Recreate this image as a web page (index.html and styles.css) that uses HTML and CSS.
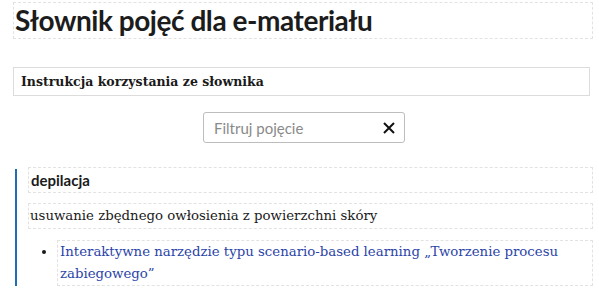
FILE: index.html
```html
<!DOCTYPE html>
<html lang="pl">
<head>
<meta charset="utf-8">
<title>Słownik pojęć dla e-materiału</title>
<link rel="stylesheet" href="styles.css">
</head>
<body>
<main class="page">
  <h1 class="title">Słownik pojęć dla e-materiału</h1>
  <div class="instructions">Instrukcja korzystania ze słownika</div>
  <div class="filter-row">
    <label class="filter">
      <input class="filter-input" type="text" placeholder="Filtruj pojęcie">
      <span class="filter-clear" aria-label="Wyczyść">
        <svg width="14" height="14" viewBox="0 0 14 14"><path d="M2 2 L12 12 M12 2 L2 12" stroke="#111" stroke-width="2" stroke-linecap="butt"/></svg>
      </span>
    </label>
  </div>
  <section class="entry">
    <div class="term">depilacja</div>
    <div class="definition">usuwanie zbędnego owłosienia z powierzchni skóry</div>
    <ul class="links">
      <li class="link-item"><a class="link" href="#">Interaktywne narzędzie typu scenario-based learning „Tworzenie procesu zabiegowego”</a></li>
    </ul>
  </section>
</main>
</body>
</html>
```

FILE: styles.css
```css
html, body {
  margin: 0;
  padding: 0;
  background: #fff;
}
body {
  color: #1a1a1a;
  font-family: "Liberation Serif", serif;
}
.page {
  width: 580px;
  margin-left: 13px;
  padding-top: 2px;
}
.title {
  margin: 0;
  border: 1px dashed #e2e2e2;
  height: 35px;
  font-family: Lato, sans-serif;
  font-weight: 700;
  font-size: 28px;
  line-height: 35px;
  padding-left: 1px;
  color: #1c1c1c;
  letter-spacing: -0.45px;
}
.instructions {
  margin-top: 28px;
  margin-right: 3px;
  border: 1px solid #dcdcdc;
  height: 27px;
  line-height: 27px;
  padding-left: 7px;
  font-family: "DejaVu Serif", serif;
  font-weight: 700;
  font-size: 12.5px;
  color: #1a1a1a;
}
.filter-row {
  display: flex;
  justify-content: center;
  margin-top: 16px;
  padding-left: 2px;
}
.filter {
  display: flex;
  align-items: center;
  width: 200px;
  height: 29px;
  border: 1px solid #bdbdbd;
  border-radius: 3px;
}
.filter-input {
  flex: 1;
  min-width: 0;
  border: 0;
  outline: 0;
  padding: 0 0 0 10px;
  background: transparent;
  font-family: Lato, sans-serif;
  font-size: 15px;
  color: #333;
}
.filter-input::placeholder {
  color: #8a8a8a;
}
.filter-clear {
  display: flex;
  width: 14px;
  height: 14px;
  margin-right: 8px;
}
.entry {
  margin-top: 26px;
  margin-left: 2px;
  border-left: 2px solid #1f6db3;
  padding-left: 11px;
  display: flex;
  flex-direction: column;
}
.term {
  margin-top: -2px;
  border: 1px dashed #e2e2e2;
  height: 24px;
  line-height: 24px;
  padding-left: 2px;
  font-family: Lato, sans-serif;
  font-weight: 700;
  font-size: 15px;
  color: #1a1a1a;
}
.definition {
  margin-top: 10px;
  border: 1px dashed #e2e2e2;
  height: 24px;
  line-height: 24px;
  padding-left: 1px;
  font-family: "DejaVu Serif", serif;
  font-size: 13.3px;
  color: #1a1a1a;
}
.links {
  margin: 11px 0 0 0;
  padding: 0 0 0 29px;
}
.link-item {
  border: 1px dashed #e2e2e2;
  padding-left: 2px;
  font-family: "DejaVu Serif", serif;
  font-size: 13.3px;
  line-height: 22px;
}
.link-item::marker {
  color: #1a1a1a;
}
.link {
  color: #2b44a8;
  text-decoration: none;
}
```
